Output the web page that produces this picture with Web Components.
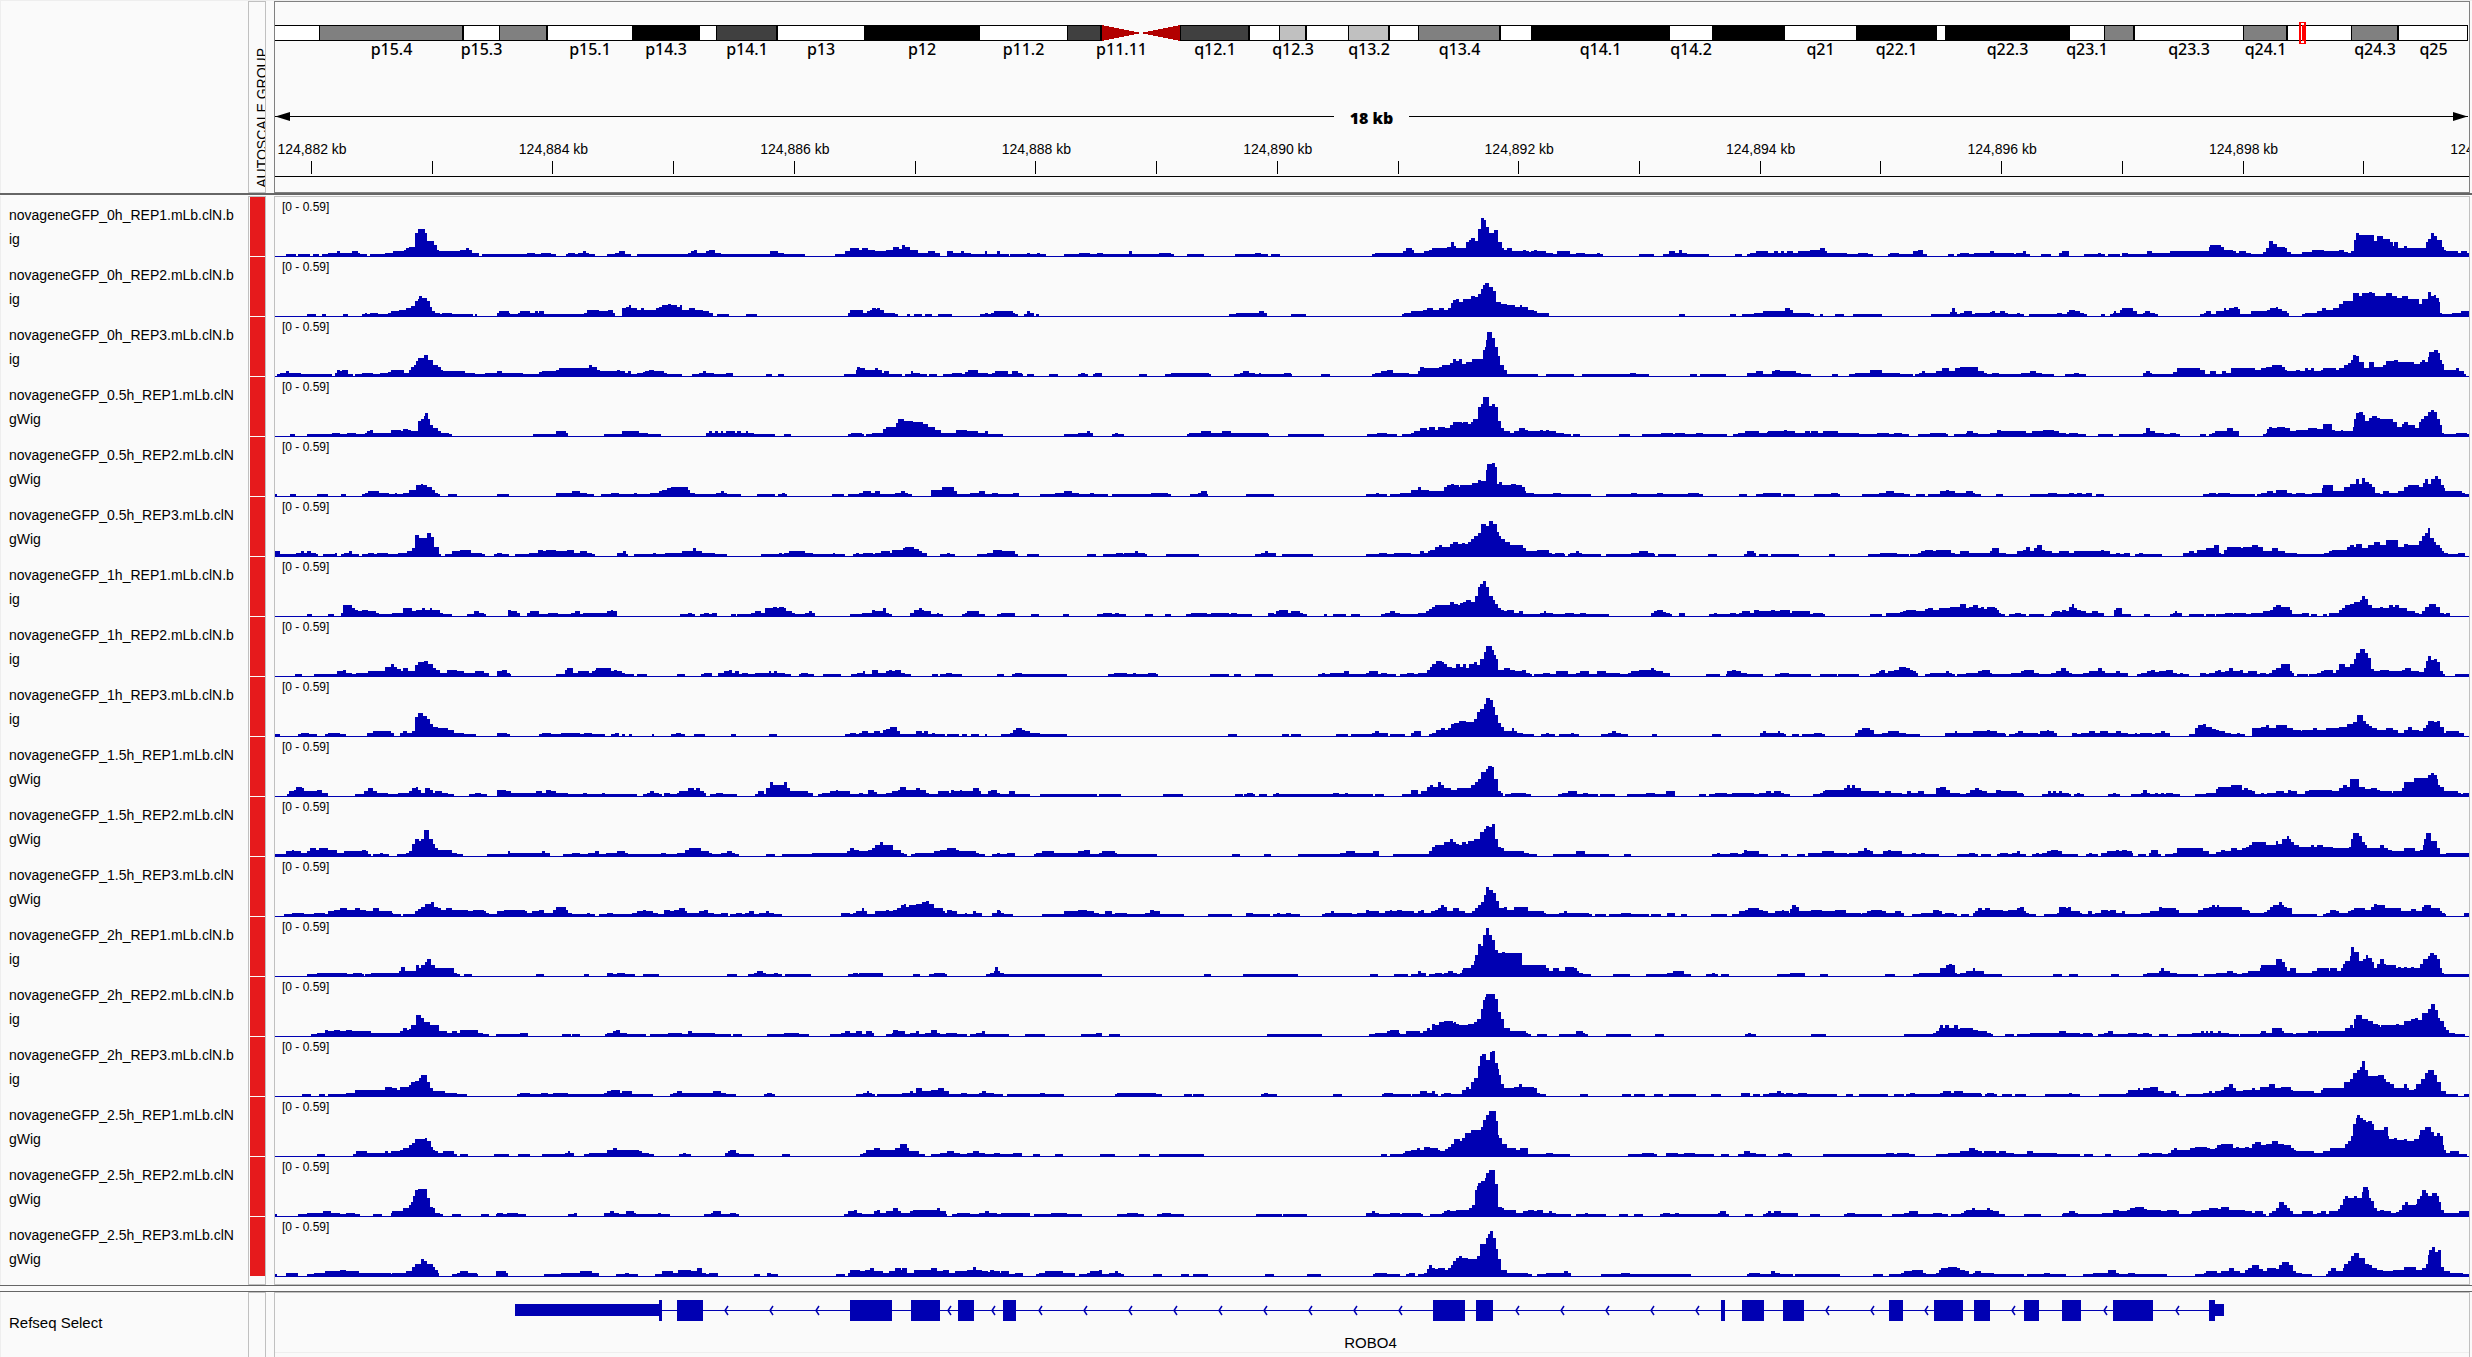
<!DOCTYPE html>
<html lang="en">
<head>
<meta charset="utf-8">
<title>Genome Viewer</title>
<style>
  html, body { margin: 0; }
  body { background: #fafafa; color: #000; font-family: "Liberation Sans", Arial, sans-serif; }
</style>
</head>
<body>
<genome-browser></genome-browser>

<template id="browser-template">
  <style>
    :host {
      display: flex; flex-direction: column; box-sizing: border-box; min-height: 100vh;
      border-top: 1px solid #eee; overflow: hidden;
    }
    panel-row { flex: none; }
    panel-row.last { flex: 1; }
    .split { flex: none; height: 2px; background: #666; margin-bottom: 1px; }
    .gap { flex: none; height: 5px; border: solid #666; border-width: 1px 0; }
    .names { padding-bottom: 7px; font-size: 14px; }
    panel-row.last track-name { font-size: 15px; }
    attribute-column { padding-bottom: 7px; }
  </style>
  <panel-row strong>
    <attribute-heading slot="attributes">AUTOSCALE GROUP</attribute-heading>
    <chromosome-ideogram slot="data"></chromosome-ideogram>
    <span-bar slot="data">18 kb</span-bar>
    <genome-ruler slot="data"></genome-ruler>
  </panel-row>
  <div class="split"></div>
  <panel-row>
    <div slot="names" class="names"></div>
    <attribute-column slot="attributes"></attribute-column>
    <div slot="data" class="plots"></div>
  </panel-row>
  <div class="gap"></div>
  <panel-row class="last">
    <track-name slot="names">Refseq Select</track-name>
    <gene-track slot="data">ROBO4</gene-track>
  </panel-row>
</template>

<template id="panel-template">
  <style>
    :host { display: grid; grid-template-columns: 248px 18px minmax(0, 1fr); padding-right: 2px; }
    .names { border-left: 1px solid #eee; min-width: 0; }
    .attributes { border: 1px solid #c0c0c0; overflow: hidden; }
    .data { margin-left: 8px; border: 1px solid #c0c0c0; min-width: 0; overflow: hidden; }
    .names { padding-top: 1px; }
    :host([strong]) .data { border-color: #808080; }
    :host(.last) .attributes, :host(.last) .data { border-bottom: 0; }
  </style>
  <div class="names"><slot name="names"></slot></div>
  <div class="attributes"><slot name="attributes"></slot></div>
  <div class="data"><slot name="data"></slot></div>
</template>

<script>
const INK = '#0000b2';

/* ---------- cytobands: end position, stain, label ---------- */
const BAND_START = 275;
const BANDS = [
  [319, 'white', ''], [464, 'gray', 'p15.4'], [499, 'white', 'p15.3'], [548, 'gray', ''],
  [632, 'white', 'p15.1'], [700, 'black', 'p14.3'], [716, 'white', ''], [778, 'dark', 'p14.1'],
  [864, 'white', 'p13'], [980, 'black', 'p12'], [1067, 'white', 'p11.2'], [1102, 'dark', ''],
  [1141, 'cen-left', 'p11.11'], [1180, 'cen-right', ''], [1250, 'dark', 'q12.1'], [1279, 'white', ''],
  [1307, 'light', 'q12.3'], [1348, 'white', ''], [1390, 'light', 'q13.2'], [1418, 'white', ''],
  [1501, 'gray', 'q13.4'], [1531, 'white', ''], [1670, 'black', 'q14.1'], [1712, 'white', 'q14.2'],
  [1785, 'black', ''], [1856, 'white', 'q21'], [1937, 'black', 'q22.1'], [1945, 'white', ''],
  [2070, 'black', 'q22.3'], [2104, 'white', 'q23.1'], [2135, 'gray', ''], [2243, 'white', 'q23.3'],
  [2288, 'gray', 'q24.1'], [2351, 'white', ''], [2399, 'gray', 'q24.3'], [2468, 'white', 'q25']
];

/* ---------- coverage: three tiles per track, each a list of "start height" steps ---------- */
const TILE_OFFSETS = [-11, 1536, 3087];
const TILE_ENDS = [1547, 1551, 1562];
const PLOT_UNITS = 4649;
const TRACKS = [
 { name: ['novageneGFP_0h_REP1.mLb.clN.b', 'ig'], tiles: [
 "11 1,34 3,55 1,59 3,85 1,91 3,105 1,110 3,124 4,142 6,148 4,174 6,186 4,192 3,206 1,212 3,244 4,260 6,284 7,289 9,296 10,308 24,314 28,328 24,334 16,347 12,354 7,359 6,402 7,415 9,422 7,428 4,443 1,449 3,545 4,561 3,575 4,595 3,606 1,627 3,632 4,646 3,652 4,664 6,670 4,676 3,689 1,714 3,732 4,740 6,752 3,765 1,778 3,887 4,893 6,898 7,905 4,925 6,931 7,944 4,957 3,1059 6,1076 4,1090 3,1134 1,1197 3,1218 6,1229 9,1249 7,1254 9,1268 7,1283 6,1306 7,1320 10,1333 8,1339 12,1346 10,1357 7,1373 4,1395 6,1409 4,1421 1,1436 6,1447 4,1464 6,1470 4,1486 3,1515 6,1520 3,1540 6",
 "0 3,19 1,21 3,57 4,64 3,78 4,85 3,97 1,136 3,167 4,191 3,206 4,218 3,273 6,280 3,337 4,363 3,369 1,396 3,432 1,498 3,540 4,553 3,568 1,574 3,593 1,788 3,795 4,855 6,860 9,873 7,878 4,898 6,909 7,915 9,947 10,956 15,962 11,967 9,987 15,994 17,999 19,1006 16,1013 28,1019 39,1026 37,1030 30,1037 24,1048 27,1055 15,1063 9,1069 7,1074 9,1086 6,1108 7,1114 6,1121 5,1126 6,1132 7,1139 6,1157 4,1171 3,1181 6,1208 3,1220 4,1240 3,1265 4,1272 3,1278 1,1354 3,1386 1,1405 3,1418 6,1431 4,1438 7,1446 4,1456 3,1502 1",
 "0 1,6 3,21 1,33 3,38 4,52 6,76 4,89 6,97 4,104 6,110 4,117 6,129 4,140 6,165 7,186 9,197 6,202 4,243 3,267 4,288 3,299 1,331 3,336 4,355 3,383 6,395 7,406 3,414 1,458 3,470 1,477 3,484 4,502 3,514 4,547 6,555 4,598 3,603 4,617 6,624 3,631 1,655 3,676 1,693 4,699 6,714 1,746 3,776 4,783 3,790 1,797 3,822 1,826 4,839 3,879 6,890 4,928 6,1011 10,1013 12,1036 10,1043 7,1062 6,1069 4,1074 6,1089 4,1100 3,1125 5,1131 9,1139 16,1147 13,1156 10,1172 9,1177 5,1184 3,1208 5,1229 7,1254 6,1286 7,1297 5,1305 4,1312 6,1318 17,1322 24,1329 22,1360 16,1367 21,1380 18,1394 15,1401 11,1404 15,1411 9,1424 11,1430 9,1470 15,1475 18,1481 24,1487 21,1494 17,1504 10,1508 7,1514 6,1538 4,1545 6,1558 4"]},
 { name: ['novageneGFP_0h_REP2.mLb.clN.b', 'ig'], tiles: [
 "11 1,78 3,97 1,110 3,119 1,155 3,166 1,196 3,201 4,207 3,212 4,229 3,251 4,256 6,273 7,289 9,300 11,308 16,314 18,317 21,322 19,333 16,339 10,344 6,350 4,360 3,365 4,385 3,430 1,434 3,440 1,482 4,485 6,506 4,510 3,525 4,530 6,551 4,562 6,568 4,571 6,581 3,630 3,665 4,672 7,698 6,717 7,728 4,732 1,746 9,754 10,761 12,765 9,778 7,786 9,792 7,818 9,825 10,832 12,844 13,850 12,862 10,869 12,874 7,888 9,901 7,918 6,931 4,939 1,948 3,974 1,1010 3,1032 1,1226 4,1229 7,1243 7,1256 4,1265 6,1271 7,1276 9,1284 8,1287 9,1294 7,1301 4,1324 3,1331 1,1350 3,1356 1,1366 3,1383 1,1388 3,1403 1,1415 3,1445 1,1505 3,1516 4,1521 3,1528 4,1534 6",
 "0 6,27 4,32 3,38 1,51 3,57 6,64 4,72 1,76 3,83 1,486 3,501 4,550 6,559 4,567 1,617 3,648 1,852 3,857 4,872 6,896 7,904 9,917 7,930 9,941 7,949 9,955 14,961 17,966 18,972 15,981 18,998 21,1006 20,1013 23,1019 28,1023 32,1027 34,1036 30,1044 26,1051 15,1062 13,1075 12,1092 10,1103 12,1107 10,1118 7,1131 6,1138 4,1163 1,1438 3,1451 1,1547 3",
 "0 3,8 1,21 3,46 4,66 6,113 9,124 7,129 4,165 3,174 1,186 3,193 1,218 3,237 1,256 3,318 1,422 3,463 5,466 9,473 5,478 3,484 4,492 6,509 3,515 4,547 5,552 6,558 4,568 6,578 4,585 3,605 4,611 3,619 1,629 3,689 4,700 3,710 5,714 7,728 6,738 4,746 3,752 1,782 3,790 1,801 3,807 4,809 6,815 4,822 7,826 9,851 6,858 3,872 4,875 6,886 4,897 3,903 1,992 3,1000 4,1005 6,1016 3,1026 6,1043 9,1048 7,1054 9,1065 10,1073 8,1077 3,1086 3,1101 6,1134 7,1140 9,1152 10,1158 8,1165 6,1176 4,1181 1,1208 3,1215 4,1240 6,1251 9,1260 7,1273 9,1287 13,1294 16,1316 24,1329 21,1335 24,1350 25,1356 24,1362 21,1386 24,1398 21,1409 19,1420 21,1432 18,1456 13,1462 18,1475 25,1481 21,1487 22,1493 19,1498 15,1501 4,1505 3,1527 4,1545 6,1560 6"]},
 { name: ['novageneGFP_0h_REP3.mLb.clN.b', 'ig'], tiles: [
 "11 1,15 3,22 4,34 6,40 4,67 3,131 1,138 4,142 7,148 6,153 7,165 3,176 1,181 3,196 4,219 3,233 4,251 5,256 7,284 4,296 7,300 10,306 12,309 16,315 19,326 22,335 17,346 12,357 10,362 7,367 6,414 4,434 3,456 4,481 6,492 4,536 3,570 5,576 6,606 7,612 9,636 9,676 12,683 10,694 7,700 6,735 7,742 6,752 4,760 6,766 3,778 4,790 5,795 6,803 7,815 6,836 4,842 3,873 1,894 3,909 4,918 6,925 4,941 3,966 4,982 1,1051 3,1065 1,1076 3,1090 1,1217 3,1242 7,1245 10,1250 9,1261 7,1279 7,1283 9,1288 7,1298 4,1302 6,1311 3,1339 1,1345 3,1358 6,1363 4,1377 3,1393 1,1397 3,1414 1,1426 3,1446 4,1466 3,1473 5,1479 7,1501 4,1522 3,1530 4,1537 6",
 "0 6,18 3,25 6,38 4,46 3,50 1,57 3,72 1,104 3,123 1,165 3,172 4,180 3,186 1,197 3,201 4,216 1,295 3,311 1,350 3,363 4,444 3,447 1,496 3,508 4,515 6,528 4,541 3,548 4,554 3,601 4,617 3,619 1,680 3,699 1,788 3,795 4,807 6,821 7,834 4,867 3,886 6,890 10,898 9,930 10,937 12,949 12,954 14,961 18,967 16,973 18,979 13,987 15,1000 18,1023 27,1027 30,1031 37,1032 45,1043 39,1049 30,1056 21,1060 12,1068 7,1074 3,1140 1,1157 3,1216 1,1233 3,1335 4,1348 3,1375 1,1462 3,1477 1,1483 3,1538 1",
 "0 1,32 4,52 6,66 3,85 6,91 7,102 6,136 4,147 3,167 1,213 3,225 1,249 3,262 4,292 7,318 4,356 3,384 1,388 3,397 4,403 6,409 4,432 6,445 9,460 6,473 9,484 10,522 6,535 4,541 3,552 4,566 3,612 4,631 6,644 4,657 3,682 1,706 3,725 4,736 3,750 1,871 4,877 6,886 4,890 3,934 5,943 9,993 7,1003 3,1013 6,1026 3,1038 6,1048 4,1057 9,1108 7,1121 9,1131 10,1144 12,1165 10,1172 7,1176 6,1196 7,1204 6,1214 9,1220 7,1227 9,1233 6,1248 7,1253 9,1280 7,1286 9,1297 12,1305 14,1312 17,1316 22,1323 21,1329 15,1340 9,1350 15,1360 10,1380 12,1387 16,1404 17,1411 15,1445 13,1458 15,1462 17,1468 15,1475 20,1477 25,1487 27,1497 24,1501 17,1505 13,1508 7,1534 9,1540 6,1551 3,1556 1"]},
 { name: ['novageneGFP_0.5h_REP1.mLb.clN', 'gWig'], tiles: [
 "11 1,43 3,54 1,78 3,131 4,148 3,164 4,182 3,202 4,206 6,213 7,219 4,256 7,279 6,282 8,293 7,300 6,313 16,320 18,326 21,329 24,335 18,340 12,345 9,357 6,363 4,379 3,386 1,557 3,606 6,627 4,632 1,708 3,746 6,783 4,802 3,828 1,925 4,931 6,938 4,943 6,950 4,956 6,961 4,967 6,986 4,991 6,999 4,1009 6,1014 4,1025 3,1070 1,1089 3,1104 1,1225 3,1232 4,1254 3,1260 1,1263 3,1276 4,1300 8,1306 10,1326 14,1331 18,1343 16,1362 15,1385 13,1395 10,1410 7,1423 4,1454 7,1478 6,1500 4,1515 6,1521 3,1537 3",
 "0 3,6 1,136 3,165 4,184 6,191 4,198 1,237 3,244 4,250 3,263 1,396 3,401 4,427 6,447 4,470 6,489 4,568 3,571 1,610 3,687 1,778 3,799 4,821 3,841 1,852 3,871 4,877 6,890 9,904 7,909 10,922 7,928 10,943 9,954 12,960 15,979 14,981 15,992 13,998 15,1003 18,1013 30,1019 33,1023 40,1036 31,1043 33,1049 30,1056 16,1062 9,1069 6,1081 4,1089 6,1101 9,1112 7,1118 6,1144 7,1150 6,1158 7,1163 6,1178 4,1196 3,1210 1,1214 3,1229 1,1312 3,1335 1,1360 3,1401 4,1426 3,1430 4,1451 3,1475 4,1490 3,1540 1",
 "0 1,2 3,13 4,28 6,57 4,74 5,76 6,110 7,117 6,134 4,155 6,165 4,168 6,183 4,193 6,225 4,269 3,307 4,333 3,344 4,361 3,375 1,394 3,420 4,453 3,458 1,470 3,496 4,499 6,510 4,522 3,548 4,562 7,571 6,624 4,636 6,660 7,682 6,694 4,707 3,714 4,734 3,750 1,776 3,807 1,820 3,871 4,877 9,886 6,896 4,915 3,928 4,941 3,949 1,992 3,1005 1,1012 3,1017 4,1023 6,1050 9,1062 6,1074 1,1125 3,1131 4,1134 8,1138 10,1144 9,1156 10,1172 9,1182 6,1196 7,1220 9,1240 8,1253 13,1271 7,1277 6,1291 7,1294 6,1316 10,1318 18,1322 24,1329 25,1337 22,1341 16,1350 19,1356 21,1366 19,1374 18,1400 15,1409 10,1420 13,1425 15,1432 12,1447 9,1456 15,1461 18,1467 21,1475 25,1481 27,1487 25,1495 18,1500 12,1505 4,1508 3,1534 4,1558 3"]},
 { name: ['novageneGFP_0.5h_REP2.mLb.clN', 'gWig'], tiles: [
 "11 3,16 1,43 3,55 1,101 3,123 1,150 3,162 1,196 3,202 4,208 6,231 4,252 3,265 4,270 3,282 4,295 7,309 12,320 13,325 12,333 10,344 7,350 4,357 3,360 1,377 3,396 1,481 3,506 1,606 4,641 6,658 4,672 3,686 1,702 3,723 4,740 3,771 4,778 3,806 4,824 6,832 7,842 9,851 10,886 7,891 4,902 3,945 4,956 6,962 4,968 3,999 1,1033 3,1071 1,1076 3,1086 4,1091 3,1095 1,1191 3,1217 1,1225 3,1249 4,1257 6,1273 4,1282 6,1293 3,1324 4,1337 6,1346 4,1352 3,1361 1,1402 7,1425 10,1450 6,1456 3,1483 4,1503 6,1515 3,1530 4,1543 3",
 "0 3,28 4,40 1,85 3,117 4,136 6,153 4,167 3,191 4,199 3,229 1,237 3,320 4,356 3,362 1,403 3,420 4,426 6,439 3,441 1,521 3,581 1,776 3,797 4,803 3,820 1,826 3,848 4,871 7,886 10,892 7,909 6,941 10,947 12,955 13,962 12,973 10,976 12,1001 14,1013 17,1019 16,1030 27,1032 33,1043 34,1049 30,1054 13,1058 15,1064 12,1081 12,1084 13,1094 12,1107 10,1112 6,1114 4,1132 3,1171 4,1189 3,1252 1,1284 3,1337 4,1350 3,1392 4,1405 3,1458 4,1482 3,1490 1",
 "0 1,15 3,32 1,51 3,66 4,104 1,108 3,133 1,174 3,210 4,225 3,229 1,275 3,311 4,326 6,343 4,364 3,377 1,390 3,409 1,415 3,441 6,453 7,460 6,473 4,496 6,511 4,516 3,528 1,559 3,574 1,631 3,669 4,689 3,714 4,726 3,731 4,743 3,750 4,763 1,771 3,788 1,998 3,1012 4,1026 3,1030 4,1055 3,1108 1,1112 3,1121 4,1133 6,1146 4,1152 7,1177 4,1186 3,1195 4,1214 3,1229 4,1248 4,1251 9,1253 12,1273 6,1297 10,1309 13,1322 18,1329 13,1335 19,1342 15,1350 13,1356 10,1362 4,1374 3,1379 6,1393 4,1411 6,1424 10,1432 12,1456 10,1464 14,1468 18,1475 13,1481 18,1490 21,1496 18,1502 12,1508 9,1512 6,1521 6,1547 4,1553 3"]},
 { name: ['novageneGFP_0.5h_REP3.mLb.clN', 'gWig'], tiles: [
 "11 6,22 3,55 4,67 6,72 4,79 6,88 4,97 3,102 1,112 3,138 4,143 1,150 3,157 4,167 6,174 3,188 1,195 3,208 4,220 3,227 4,251 3,272 4,290 6,302 9,308 22,316 19,334 24,342 20,347 10,359 3,362 1,372 3,385 6,403 7,427 4,449 3,456 1,475 3,482 4,492 3,506 1,519 3,550 4,568 7,578 6,586 7,606 6,630 7,645 4,657 6,672 4,682 3,689 1,735 4,748 6,754 3,760 1,771 3,812 4,818 3,838 4,874 6,897 9,904 6,916 4,943 3,968 1,1040 3,1079 4,1086 3,1090 4,1101 6,1134 4,1152 3,1193 4,1198 3,1218 1,1236 3,1243 4,1248 3,1257 4,1279 3,1283 4,1295 6,1314 4,1318 7,1342 9,1346 10,1365 8,1376 6,1383 4,1393 1,1420 3,1435 4,1441 3,1451 1,1499 3,1520 4,1532 7",
 "0 7,5 6,32 3,38 1,57 3,83 1,184 3,203 1,218 3,245 4,260 3,264 4,286 6,293 4,307 3,311 1,352 3,422 1,541 3,553 4,562 6,568 4,586 1,598 3,663 1,776 3,803 4,821 3,835 4,871 3,890 6,898 4,908 6,911 7,922 10,930 12,937 10,949 10,954 13,960 15,970 13,979 14,985 13,992 15,998 18,1004 21,1013 24,1019 33,1030 31,1037 36,1045 33,1054 25,1058 21,1062 18,1071 15,1081 12,1108 9,1114 6,1138 7,1163 4,1170 3,1177 4,1195 3,1197 1,1204 3,1208 4,1220 6,1227 4,1233 3,1273 1,1284 3,1337 4,1354 6,1373 4,1386 3,1388 1,1394 3,1432 1,1500 3,1519 1",
 "0 1,25 3,33 6,46 4,52 1,57 3,76 1,83 3,142 1,206 3,218 1,288 3,314 4,350 3,375 1,377 3,394 4,400 6,409 7,427 6,432 7,465 4,473 3,484 6,502 4,530 4,547 6,552 9,566 4,580 3,605 6,617 7,624 10,631 6,641 9,647 12,657 7,663 6,679 4,694 6,714 4,726 6,746 6,782 7,788 6,801 3,814 4,822 3,832 4,843 1,855 3,862 4,871 3,911 1,956 4,968 6,979 4,985 7,1004 9,1021 12,1032 4,1037 3,1043 7,1050 10,1078 9,1084 10,1102 12,1115 10,1126 6,1144 9,1158 6,1172 4,1197 3,1254 4,1265 6,1272 7,1303 10,1310 12,1318 10,1322 13,1335 9,1347 12,1360 15,1374 12,1386 17,1411 10,1425 13,1432 12,1456 16,1462 21,1468 24,1475 29,1480 19,1487 15,1493 12,1500 9,1504 6,1508 4,1517 3,1538 4,1553 1"]},
 { name: ['novageneGFP_1h_REP1.mLb.clN.b', 'ig'], tiles: [
 "11 1,78 3,90 1,123 3,137 1,150 4,155 12,174 9,180 7,187 6,195 7,208 6,225 4,232 3,258 4,273 4,282 9,302 6,310 7,322 9,328 7,340 9,344 7,360 4,368 3,386 1,417 3,433 6,443 4,453 3,459 1,505 7,511 6,523 4,531 1,545 4,552 6,570 3,590 4,611 3,639 4,646 6,658 3,664 4,714 6,722 7,728 6,735 1,870 3,886 4,894 3,900 1,912 3,919 4,930 3,938 4,948 1,977 3,987 1,991 3,1019 4,1028 6,1040 4,1050 9,1066 10,1075 9,1079 10,1089 9,1093 6,1107 4,1113 3,1134 4,1142 6,1149 4,1155 1,1229 3,1254 4,1268 4,1276 7,1282 6,1299 9,1305 4,1313 3,1318 1,1356 4,1366 7,1375 9,1382 7,1387 6,1401 3,1413 4,1419 3,1427 1,1466 3,1473 4,1478 6,1502 3,1515 1,1540 3",
 "0 3,3 4,33 1,66 3,83 1,133 3,146 1,206 3,218 4,237 3,244 4,252 3,267 1,307 3,324 1,350 3,363 1,394 3,406 4,438 3,447 4,486 3,489 4,502 3,534 1,568 4,580 3,586 6,592 7,610 4,617 6,636 4,643 3,650 1,687 3,693 1,706 3,733 1,744 3,763 1,807 3,815 4,826 6,838 4,848 3,886 4,902 6,909 8,915 10,922 12,954 15,962 13,970 12,975 14,981 15,988 17,999 15,1006 21,1013 30,1018 33,1023 36,1030 30,1036 21,1045 17,1049 13,1055 9,1062 7,1069 6,1075 7,1089 4,1101 6,1108 3,1145 4,1153 6,1158 4,1172 3,1197 4,1216 3,1229 4,1242 3,1290 1,1380 4,1386 6,1392 7,1405 5,1411 4,1419 3,1424 1,1438 4,1451 1,1502 3,1513 4,1519 3,1547 4",
 "0 4,8 3,15 4,21 6,38 4,47 7,57 6,83 7,91 6,103 7,123 4,127 6,165 3,172 4,193 3,197 1,292 3,318 1,326 4,356 5,362 6,368 7,390 6,409 8,415 9,426 7,438 9,463 10,484 13,496 9,502 10,510 12,522 9,528 10,535 8,540 10,558 9,561 7,566 4,571 3,578 1,587 3,601 4,612 3,624 1,629 3,661 1,676 3,679 5,682 6,696 5,700 7,708 6,714 10,720 13,726 9,732 7,740 6,750 4,763 6,776 4,788 1,809 7,815 9,827 3,845 1,873 3,886 1,928 3,934 4,938 6,944 4,953 1,968 3,1000 1,1004 3,1023 1,1026 3,1045 4,1062 3,1065 4,1089 3,1100 4,1115 4,1125 6,1141 7,1147 10,1153 12,1163 10,1182 7,1188 3,1208 4,1222 1,1227 3,1240 1,1252 3,1261 1,1265 4,1286 7,1292 9,1299 12,1310 13,1318 15,1331 17,1335 21,1341 18,1348 12,1356 9,1373 10,1380 9,1393 12,1400 10,1406 12,1413 9,1430 6,1448 4,1456 3,1462 6,1468 10,1477 13,1493 10,1501 4,1509 3,1513 4,1521 1"]},
 { name: ['novageneGFP_1h_REP2.mLb.clN.b', 'ig'], tiles: [
 "11 1,53 3,68 1,93 3,142 6,155 7,161 4,175 3,182 4,208 6,245 10,256 13,264 10,269 8,277 6,283 9,293 6,308 12,315 15,326 16,335 13,346 9,352 7,360 4,376 7,396 6,411 4,434 6,453 4,465 1,481 6,492 7,503 4,510 3,512 1,606 3,625 7,630 9,643 4,652 6,676 4,682 6,689 7,692 9,722 6,730 7,735 6,746 4,753 3,771 1,778 3,799 1,862 3,879 1,913 3,919 4,938 1,950 4,962 6,974 7,980 4,986 6,994 3,1001 4,1014 3,1028 4,1057 6,1063 4,1069 6,1075 4,1091 3,1104 1,1121 3,1126 4,1140 3,1154 1,1172 3,1210 1,1232 3,1244 4,1257 6,1262 3,1275 7,1288 4,1305 6,1312 7,1318 6,1324 7,1337 4,1345 3,1358 1,1403 3,1415 1,1420 3,1432 4,1445 3,1466 1,1540 3",
 "0 3,8 1,25 3,32 4,47 3,142 1,229 3,241 4,269 3,282 4,288 3,314 4,331 3,336 1,445 3,485 1,496 3,511 1,540 3,578 1,674 3,682 4,689 3,700 4,730 6,740 3,776 4,782 6,801 3,807 4,820 3,839 1,848 3,863 4,877 3,886 4,905 7,911 10,915 13,924 16,937 15,941 13,947 10,957 9,966 13,974 10,981 13,987 9,994 13,1004 15,1011 12,1018 18,1026 25,1030 31,1042 27,1048 22,1052 18,1056 7,1069 9,1080 7,1092 6,1107 7,1114 4,1124 3,1127 1,1132 3,1151 4,1165 3,1178 6,1204 3,1221 4,1229 6,1248 3,1266 6,1284 4,1315 3,1331 4,1337 6,1354 7,1380 9,1386 7,1391 6,1405 4,1419 3,1420 1,1496 3,1526 1,1538 3,1541 6",
 "0 7,8 6,19 4,32 3,66 1,91 3,102 4,121 3,167 1,186 3,222 1,225 3,269 1,292 3,305 4,311 6,316 7,324 4,331 6,343 7,355 10,368 9,377 7,383 6,390 4,395 1,409 3,419 4,453 6,460 4,466 3,473 1,478 3,496 4,522 6,530 7,547 4,552 3,591 4,612 6,619 7,641 4,650 3,676 4,687 6,697 9,708 6,714 4,720 3,744 4,757 6,776 9,784 6,790 4,814 6,822 4,840 1,858 3,867 4,879 6,888 7,897 5,905 6,920 7,934 4,944 3,950 4,956 3,968 1,992 4,1005 3,1012 4,1023 6,1031 7,1037 5,1045 6,1054 9,1062 6,1077 7,1084 4,1093 6,1112 3,1119 4,1131 3,1138 4,1144 7,1153 9,1163 13,1182 6,1188 4,1191 1,1197 3,1220 1,1223 3,1240 4,1248 6,1255 7,1273 4,1280 7,1286 13,1299 10,1310 13,1318 18,1322 24,1331 28,1341 24,1348 19,1355 8,1361 6,1373 7,1393 6,1420 7,1427 9,1440 6,1456 5,1467 9,1470 16,1475 21,1482 17,1487 18,1494 15,1501 6,1506 3,1511 1,1532 3"]},
 { name: ['novageneGFP_1h_REP3.mLb.clN.b', 'ig'], tiles: [
 "11 3,22 1,59 3,67 4,83 3,99 1,118 3,124 4,149 3,161 1,206 4,218 6,256 4,264 1,275 4,283 6,290 4,302 6,308 20,314 24,325 21,334 18,340 13,345 10,357 9,377 7,391 4,411 3,436 1,482 4,503 3,510 1,570 3,577 4,596 3,617 4,657 3,665 4,682 3,710 1,723 3,732 4,740 1,746 3,752 1,761 3,767 1,809 3,815 1,850 3,860 4,872 3,880 1,898 3,923 1,977 3,987 1,1057 3,1075 1,1218 3,1229 4,1242 3,1248 4,1254 6,1268 4,1280 6,1293 4,1299 7,1305 8,1314 10,1330 6,1336 3,1348 3,1369 6,1382 4,1387 6,1395 3,1403 4,1410 3,1430 1,1436 3,1460 1,1466 3,1478 1,1486 3,1502 1,1515 3,1520 1",
 "0 1,2 3,21 4,27 7,34 9,46 7,53 6,64 4,85 3,142 1,483 3,502 1,598 3,612 1,617 3,638 1,712 3,737 1,744 3,788 4,795 6,803 4,822 1,826 3,858 1,871 4,877 6,892 1,909 3,916 4,924 7,935 9,943 7,949 9,956 13,962 14,973 16,987 15,1005 18,1011 25,1018 28,1025 33,1030 39,1038 37,1045 30,1050 22,1055 14,1062 10,1069 6,1085 9,1090 6,1096 4,1108 3,1132 1,1146 3,1157 4,1163 3,1176 1,1184 3,1210 4,1216 3,1227 1,1273 3,1289 4,1297 6,1305 4,1317 3,1331 1,1382 3,1392 1,1509 3,1528 1",
 "0 1,59 4,66 6,72 4,97 6,103 4,110 3,114 1,127 3,142 1,148 3,174 4,190 3,197 1,261 4,267 7,275 9,292 7,301 3,318 4,331 6,355 4,370 3,399 1,451 4,473 6,478 4,496 4,510 6,540 7,547 6,562 4,578 3,581 1,587 3,599 4,606 6,617 4,648 3,654 6,667 7,673 6,682 4,689 1,720 4,731 3,740 4,757 6,770 4,780 6,797 4,815 6,825 4,839 3,855 4,858 3,865 4,890 3,897 4,909 6,917 4,928 1,968 3,981 9,987 12,998 13,1005 10,1017 8,1026 7,1032 6,1045 4,1057 3,1070 4,1077 3,1087 1,1102 9,1121 10,1131 12,1139 9,1152 12,1176 9,1189 7,1205 6,1208 7,1232 9,1240 7,1259 9,1286 10,1303 13,1316 15,1325 22,1337 16,1343 13,1350 11,1356 9,1368 7,1386 9,1400 7,1411 4,1425 7,1432 10,1441 7,1456 6,1464 9,1470 12,1475 16,1487 15,1495 16,1501 10,1508 4,1513 6,1540 4,1551 1"]},
 { name: ['novageneGFP_1.5h_REP1.mLb.clN', 'gWig'], tiles: [
 "11 1,36 3,40 6,52 7,55 10,68 9,73 6,99 7,110 4,123 1,181 3,199 6,208 9,218 6,227 4,251 3,272 4,289 4,296 6,302 9,309 10,314 7,320 4,329 9,340 7,346 4,351 6,365 4,377 3,391 1,422 3,435 4,447 3,461 1,481 7,500 6,511 4,564 6,576 4,585 7,595 6,606 4,631 3,664 4,672 3,704 4,710 3,779 1,790 3,800 4,806 6,814 4,825 3,831 1,836 4,848 3,862 4,868 6,886 9,899 7,903 9,912 6,919 4,925 1,932 3,945 4,960 3,990 1,1028 3,1034 6,1047 3,1051 9,1059 15,1066 12,1089 15,1095 9,1102 6,1141 4,1152 1,1162 3,1170 4,1186 6,1200 7,1203 6,1230 3,1248 4,1256 3,1268 7,1280 5,1286 3,1305 4,1318 6,1331 7,1336 10,1348 7,1370 9,1377 7,1391 4,1396 3,1415 6,1439 4,1444 7,1450 6,1462 7,1466 6,1490 9,1502 6,1508 3,1522 6,1528 7,1541 4",
 "0 3,19 6,32 3,64 1,85 3,206 1,210 3,256 1,345 3,388 1,498 3,515 1,518 3,523 4,536 3,540 1,549 3,566 1,578 3,585 4,591 3,706 4,719 3,731 4,737 3,790 1,795 3,814 1,852 3,871 7,886 3,892 6,905 10,911 12,918 10,928 15,935 12,941 9,955 7,968 9,999 12,1006 15,1013 18,1019 25,1030 28,1034 31,1043 30,1048 18,1055 6,1061 4,1067 1,1070 3,1083 4,1115 3,1125 1,1183 3,1191 4,1204 6,1222 3,1236 4,1247 3,1267 1,1271 3,1303 1,1329 3,1369 4,1388 3,1411 6,1431 1,1481 3,1496 1,1502 3,1515 4,1540 3",
 "0 4,47 3,57 4,72 6,84 4,89 6,104 4,110 3,123 1,172 3,186 4,193 6,197 7,237 9,244 12,250 9,254 12,261 9,273 6,311 4,324 6,337 4,361 3,371 6,380 4,394 6,407 3,432 9,441 10,453 7,463 4,484 3,496 4,504 7,515 9,523 7,530 6,540 4,547 4,559 7,571 6,604 4,617 3,619 1,657 3,669 6,676 4,681 6,687 4,693 6,700 4,714 3,718 1,725 3,731 4,737 3,746 1,797 3,808 4,815 3,822 1,845 3,867 4,871 7,879 4,885 3,896 4,903 3,909 4,915 3,920 4,934 3,949 1,981 3,1004 4,1026 8,1030 10,1057 12,1082 7,1086 9,1093 7,1103 6,1108 3,1121 4,1127 3,1133 4,1152 6,1171 4,1178 7,1184 6,1197 3,1214 6,1223 7,1271 6,1286 9,1294 12,1303 10,1309 18,1328 10,1341 8,1354 9,1368 7,1373 6,1398 4,1401 6,1419 9,1424 15,1445 19,1475 22,1481 24,1487 22,1494 18,1497 12,1501 10,1508 6,1538 4,1545 3,1550 4"]},
 { name: ['novageneGFP_1.5h_REP2.mLb.clN', 'gWig'], tiles: [
 "11 3,34 6,46 7,52 6,67 4,78 6,85 9,97 7,104 9,124 7,143 4,157 6,196 7,203 6,208 3,214 1,219 3,233 4,240 3,252 1,270 3,288 4,296 6,302 13,308 18,316 16,321 18,326 27,338 18,346 13,351 9,357 7,385 4,396 3,409 1,460 3,504 6,510 4,576 6,583 4,594 1,621 3,640 4,658 3,675 4,690 6,697 3,712 4,735 6,752 4,760 3,829 4,840 3,862 4,879 7,889 9,914 6,931 4,937 3,956 4,968 6,979 4,986 3,995 1,1051 3,1071 1,1086 3,1148 4,1223 6,1229 9,1237 7,1248 6,1268 7,1275 9,1282 12,1293 15,1300 12,1320 7,1337 4,1344 3,1350 1,1358 3,1368 4,1408 6,1420 7,1434 9,1453 7,1461 6,1496 4,1502 3,1515 1,1530 3,1540 4",
 "0 3,15 4,32 1,72 3,77 4,89 6,114 4,165 6,179 7,191 3,210 4,216 6,244 4,248 3,333 1,492 3,509 1,559 3,574 1,631 3,721 4,733 6,752 4,790 6,803 1,833 3,909 6,915 10,922 12,941 15,954 18,960 15,966 13,973 12,979 15,987 13,992 16,1005 18,1018 25,1025 28,1030 31,1037 30,1043 33,1049 18,1056 10,1062 9,1069 6,1111 4,1121 3,1138 1,1172 3,1220 6,1240 3,1290 1,1322 3,1337 1,1509 3,1519 4,1526 3,1547 4",
 "0 4,13 3,21 4,25 7,33 6,57 3,76 1,104 3,120 1,137 3,155 1,161 4,191 6,216 4,244 3,249 4,267 6,280 9,286 7,292 6,299 3,320 6,331 7,337 6,361 3,381 4,390 3,400 4,409 3,439 1,478 3,502 4,516 3,522 1,528 3,549 1,562 3,568 4,585 3,593 4,605 6,611 3,624 1,637 3,644 4,650 3,657 4,667 6,676 7,692 6,700 3,733 1,750 3,757 4,763 3,776 1,782 4,795 6,815 7,820 6,826 7,838 6,848 4,851 1,860 3,877 1,884 4,888 7,903 3,909 1,917 3,934 4,943 9,998 6,1012 3,1026 5,1037 7,1045 6,1057 9,1070 7,1082 9,1089 10,1095 12,1102 15,1131 12,1153 16,1158 13,1166 18,1176 21,1181 18,1184 15,1191 12,1201 10,1227 12,1233 10,1240 12,1253 10,1273 9,1308 10,1312 18,1316 24,1328 21,1335 15,1341 12,1346 9,1373 12,1381 9,1391 7,1398 6,1411 6,1424 9,1448 6,1459 7,1464 12,1467 18,1471 24,1481 16,1494 9,1500 3,1513 4"]},
 { name: ['novageneGFP_1.5h_REP3.mLb.clN', 'gWig'], tiles: [
 "11 1,30 3,47 4,73 3,93 4,116 3,123 6,136 7,148 9,164 7,181 9,192 7,203 6,218 9,231 6,244 6,258 4,262 3,277 1,282 3,308 6,315 8,320 10,328 13,341 15,347 10,357 9,362 7,373 9,385 7,419 6,430 7,453 6,458 4,465 3,481 6,496 7,541 6,545 4,556 6,570 7,582 4,600 7,606 10,627 7,631 4,640 3,672 4,678 3,689 1,698 3,714 4,728 3,767 4,778 6,790 7,797 6,812 4,822 3,835 7,848 6,857 7,867 9,880 6,885 4,909 6,919 7,929 4,941 3,957 4,970 1,975 3,987 4,1001 3,1006 4,1016 6,1025 3,1036 4,1051 6,1058 4,1069 3,1085 1,1211 4,1229 3,1236 4,1242 6,1255 9,1260 6,1266 3,1282 6,1306 7,1313 6,1320 7,1330 9,1337 12,1343 13,1348 10,1355 12,1369 13,1383 15,1390 16,1396 13,1408 9,1427 6,1431 4,1436 7,1446 6,1457 3,1473 4,1478 3,1490 6,1496 4,1509 1,1530 4,1540 7",
 "0 6,3 4,8 3,28 1,89 3,136 6,165 7,185 6,199 4,210 3,222 6,237 3,244 4,269 3,307 4,318 7,326 6,339 3,390 1,441 3,491 1,521 4,536 3,572 1,578 3,587 4,593 3,606 4,617 3,635 1,682 3,689 4,701 6,708 4,746 3,757 4,776 7,782 6,803 4,816 6,826 7,831 6,841 7,853 6,878 4,886 6,892 7,898 4,914 6,922 7,928 9,934 12,941 10,947 6,960 9,973 6,985 4,1001 6,1006 9,1013 12,1019 15,1025 22,1030 30,1037 27,1045 24,1051 16,1057 9,1069 10,1075 7,1084 7,1089 10,1118 6,1153 4,1157 3,1184 4,1195 6,1201 4,1248 3,1254 1,1261 3,1285 1,1290 3,1316 4,1337 3,1375 1,1380 3,1401 1,1413 4,1431 1,1443 3,1456 1,1507 3,1540 1",
 "0 3,15 6,28 7,34 9,57 7,66 6,77 4,91 6,106 7,110 6,121 4,123 8,127 12,136 10,142 6,167 7,190 6,218 7,242 4,273 3,275 4,286 6,294 7,318 6,326 4,345 6,358 4,364 1,381 3,400 4,426 7,438 6,445 3,451 4,470 3,478 1,485 3,502 1,510 4,516 6,522 9,530 7,536 9,547 7,575 6,585 7,604 9,611 10,619 6,623 4,629 3,644 1,661 3,689 4,693 10,708 9,712 10,719 6,737 4,743 3,755 6,763 3,769 4,782 7,796 6,802 7,815 4,826 6,833 3,867 4,886 6,905 10,911 9,941 7,947 4,987 7,998 9,1012 10,1017 12,1023 10,1027 12,1032 10,1057 10,1082 7,1095 6,1097 4,1127 5,1134 7,1140 10,1147 12,1159 15,1165 12,1171 10,1176 9,1188 3,1240 1,1252 3,1260 4,1267 7,1280 6,1286 4,1305 6,1312 7,1318 9,1341 7,1350 7,1355 10,1361 13,1368 12,1380 12,1383 9,1417 6,1440 8,1449 6,1456 6,1462 10,1467 12,1481 9,1501 6,1505 4,1511 3,1514 1,1551 4"]},
 { name: ['novageneGFP_2h_REP1.mLb.clN.b', 'ig'], tiles: [
 "11 1,78 3,100 4,164 3,176 4,195 3,199 1,202 3,214 4,274 6,277 10,287 6,309 12,316 9,320 12,328 15,333 18,341 12,351 9,391 4,396 3,402 1,411 3,428 1,564 3,582 1,665 3,677 1,714 4,728 3,735 4,752 3,773 1,790 3,824 1,968 3,990 1,1014 3,1026 4,1032 6,1046 4,1052 3,1069 4,1076 3,1085 1,1091 3,1147 1,1225 3,1235 4,1246 3,1249 4,1300 1,1362 3,1377 1,1396 3,1408 4,1431 3,1435 1,1517 3,1527 4,1534 6,1537 10,1544 6",
 "0 4,8 3,216 1,432 3,447 1,515 3,631 1,784 3,801 1,835 3,865 1,871 3,886 6,892 4,903 1,909 3,922 4,937 3,941 4,949 6,960 4,968 3,974 4,979 7,981 9,999 12,1004 16,1006 22,1013 33,1019 31,1023 42,1030 49,1037 42,1043 37,1049 27,1055 24,1063 25,1070 24,1106 12,1157 9,1163 6,1172 9,1184 6,1197 10,1216 9,1223 6,1227 4,1235 3,1252 1,1299 3,1335 1,1369 3,1413 4,1426 6,1450 3,1464 1,1496 3,1508 4,1515 3,1521 1,1528 3,1545 1",
 "0 1,95 3,123 4,155 1,186 3,203 1,324 3,345 1,384 3,396 4,441 9,453 12,460 13,466 12,473 4,478 3,484 4,496 6,511 9,516 6,534 3,572 1,681 3,699 1,714 3,733 1,803 3,820 1,871 3,879 4,905 6,909 9,915 6,928 4,944 3,987 1,1000 3,1026 4,1050 6,1062 4,1070 3,1082 4,1093 6,1119 9,1121 12,1144 12,1153 18,1166 15,1172 10,1177 6,1182 9,1196 4,1229 6,1240 9,1265 6,1267 9,1283 6,1290 9,1294 13,1299 16,1310 21,1312 30,1318 25,1328 16,1337 18,1343 22,1349 19,1356 15,1361 9,1368 13,1374 18,1382 13,1386 12,1407 9,1411 10,1417 9,1424 10,1430 9,1440 10,1446 9,1459 13,1464 18,1475 21,1480 24,1487 22,1494 18,1500 9,1505 4,1508 3"]},
 { name: ['novageneGFP_2h_REP2.mLb.clN.b', 'ig'], tiles: [
 "11 1,88 3,100 4,116 7,123 6,136 7,148 6,162 7,174 6,214 4,275 6,283 9,290 7,296 8,300 12,309 22,320 19,327 15,339 12,359 6,376 4,385 6,397 4,403 7,441 4,452 3,465 1,480 3,530 4,548 1,619 3,638 1,641 3,657 1,710 3,715 4,727 6,733 7,741 4,757 3,797 1,806 3,843 4,873 3,887 6,894 4,944 3,977 1,981 3,1001 1,1053 3,1089 4,1121 3,1142 1,1187 3,1211 4,1218 6,1229 4,1243 6,1254 3,1264 6,1275 4,1281 1,1305 3,1318 4,1321 7,1332 6,1346 3,1357 4,1370 6,1376 3,1389 4,1402 7,1414 4,1420 3,1432 4,1457 3,1477 1,1484 3,1497 4,1510 6,1516 3",
 "0 3,19 1,53 3,95 1,172 3,203 4,216 1,231 3,254 1,566 3,682 1,782 3,795 4,820 6,826 7,845 4,848 3,860 6,890 4,897 6,904 9,911 7,915 13,922 12,930 15,941 16,960 14,962 15,967 13,973 12,992 13,1005 15,1012 18,1019 28,1023 37,1027 40,1031 43,1049 38,1055 25,1062 18,1069 9,1075 9,1081 6,1114 4,1119 3,1125 1,1138 3,1159 1,1184 3,1220 6,1235 4,1240 3,1246 1,1284 3,1337 1,1388 3,1407 1",
 "0 1,28 3,34 4,40 3,51 1,167 3,199 1,364 3,426 4,432 6,438 9,441 12,447 9,451 12,461 9,470 12,479 8,484 9,511 7,522 6,541 4,549 3,553 1,578 3,598 1,604 3,631 4,693 6,708 4,737 3,744 4,763 3,765 1,776 3,788 4,797 6,807 3,840 4,858 3,871 4,884 3,890 1,905 3,924 1,943 3,975 4,994 6,1000 4,1004 6,1010 4,1014 6,1020 4,1030 6,1036 4,1054 3,1074 1,1076 3,1119 4,1121 6,1131 4,1144 9,1165 6,1171 4,1190 3,1195 4,1220 6,1240 4,1242 6,1299 9,1310 12,1316 9,1318 18,1322 22,1335 18,1348 16,1358 13,1370 12,1374 10,1375 12,1407 13,1413 12,1425 16,1440 18,1447 19,1453 17,1462 24,1475 28,1481 33,1490 27,1496 19,1501 16,1508 10,1513 7,1519 4,1532 3,1553 1"]},
 { name: ['novageneGFP_2h_REP3.mLb.clN.b', 'ig'], tiles: [
 "11 1,68 3,87 1,105 3,117 1,123 3,162 4,180 7,244 10,259 9,269 7,275 10,296 12,300 15,308 16,316 19,320 22,334 15,340 9,346 6,371 4,396 3,417 1,524 3,530 4,551 3,575 4,590 3,600 4,631 3,708 4,714 6,722 7,741 4,747 6,767 3,812 1,848 3,855 4,862 6,873 4,940 6,957 4,966 3,987 1,1048 3,1053 4,1065 3,1070 1,1242 3,1256 4,1265 6,1269 4,1276 3,1282 1,1287 3,1339 4,1357 6,1363 4,1370 9,1382 6,1402 7,1415 9,1428 6,1440 3,1465 4,1478 3,1502 4,1510 6,1517 4,1535 3",
 "0 3,6 1,15 3,85 4,95 3,136 1,244 3,248 4,331 3,343 1,390 3,407 1,409 3,432 1,553 3,559 4,568 3,587 1,706 3,725 1,809 3,814 4,833 3,871 1,873 3,890 6,905 4,915 6,922 3,928 1,934 3,941 4,956 3,979 7,987 10,994 8,998 15,1004 19,1013 31,1018 41,1021 43,1030 37,1038 45,1043 46,1049 34,1055 28,1058 22,1062 13,1069 9,1089 10,1100 13,1107 10,1132 9,1138 4,1145 3,1157 1,1229 3,1246 1,1318 3,1337 1,1343 3,1367 1,1386 3,1405 1,1418 3,1475 1,1507 3,1528 1",
 "0 1,19 4,38 1,44 3,59 1,66 3,79 4,95 6,104 4,110 3,114 4,129 3,140 4,159 3,222 1,242 3,256 1,269 3,331 1,343 3,364 1,369 3,377 4,388 3,441 4,447 6,464 4,470 6,489 4,528 3,530 1,536 3,541 4,555 3,562 1,572 3,593 1,599 3,623 1,663 3,714 4,720 3,737 1,778 3,835 4,839 7,860 9,865 7,871 9,885 10,903 6,915 4,930 6,941 3,947 1,962 3,998 4,1011 6,1017 4,1023 6,1037 7,1043 10,1054 13,1062 9,1068 6,1084 7,1102 9,1108 7,1119 10,1138 13,1151 9,1163 10,1184 7,1190 6,1234 4,1248 7,1253 9,1297 15,1309 18,1316 24,1325 27,1331 30,1335 36,1341 27,1348 21,1370 22,1382 18,1386 15,1395 13,1404 9,1424 13,1430 9,1435 7,1445 8,1450 13,1461 18,1468 24,1475 27,1487 22,1495 15,1502 6,1513 3,1538 1,1551 3"]},
 { name: ['novageneGFP_2.5h_REP1.mLb.clN', 'gWig'], tiles: [
 "11 1,100 3,116 1,177 3,182 6,207 4,244 6,251 4,256 6,275 7,283 9,296 12,302 14,308 18,328 19,334 16,341 10,346 7,351 6,357 4,367 6,391 3,396 1,403 3,421 1,475 3,506 1,525 3,551 1,576 3,625 4,631 6,637 4,645 1,665 3,677 4,714 7,727 9,735 7,783 6,789 4,803 3,815 1,868 3,875 4,881 3,893 1,964 4,970 6,976 7,987 4,994 3,1025 1,1085 3,1102 1,1250 3,1257 4,1264 7,1281 9,1292 7,1325 9,1336 13,1350 9,1355 6,1375 3,1388 1,1402 3,1420 4,1436 6,1450 4,1463 3,1478 4,1490 6,1502 4,1516 3,1534 4",
 "0 3,28 4,46 3,47 1,70 3,85 1,117 3,133 1,212 3,244 1,295 3,318 1,337 3,432 1,807 3,820 1,826 3,854 4,858 6,872 7,884 9,890 7,898 10,911 9,928 7,932 6,944 8,949 10,955 13,962 18,975 16,980 19,985 24,998 27,1013 27,1019 30,1023 37,1031 42,1037 46,1051 36,1055 22,1058 19,1063 13,1074 9,1094 7,1102 9,1119 3,1157 4,1172 3,1208 1,1331 3,1360 4,1385 3,1392 1,1411 4,1437 3,1449 4,1472 3,1513 1,1528 3,1545 1",
 "0 1,13 3,25 6,38 4,51 3,72 1,97 3,108 4,123 3,127 1,193 3,326 4,343 3,350 4,375 3,388 1,432 3,458 4,484 6,502 9,515 7,522 6,530 4,535 6,559 4,566 6,580 4,598 3,625 6,638 4,689 3,737 1,746 3,765 1,790 3,803 1,860 3,865 4,884 3,890 4,911 3,924 4,930 7,937 9,944 7,971 9,981 10,1006 9,1014 8,1023 9,1028 12,1037 13,1062 9,1068 10,1074 9,1087 10,1095 9,1102 13,1108 15,1121 12,1131 13,1144 16,1157 13,1170 12,1184 9,1191 7,1196 6,1234 4,1252 6,1267 9,1299 13,1305 16,1312 21,1316 33,1322 39,1324 42,1331 39,1337 37,1343 35,1349 36,1356 33,1361 27,1381 30,1391 21,1393 18,1404 19,1409 17,1424 18,1430 16,1445 18,1456 22,1458 27,1468 30,1481 25,1487 21,1494 24,1500 21,1506 12,1509 7,1513 4,1521 6,1540 3,1558 1"]},
 { name: ['novageneGFP_2.5h_REP2.mLb.clN', 'gWig'], tiles: [
 "11 3,15 1,59 3,78 4,112 6,130 4,149 3,162 4,181 3,192 1,218 3,237 1,256 4,259 6,282 9,295 12,300 15,303 21,308 27,314 28,326 28,333 19,340 10,346 9,351 4,360 3,366 1,386 3,405 1,448 3,465 1,479 3,482 4,494 3,503 4,526 3,542 1,631 3,645 4,651 1,708 4,720 6,729 4,740 3,754 6,771 4,776 3,822 4,828 3,848 1,920 3,935 4,940 6,956 3,976 4,987 3,994 1,1217 3,1225 6,1237 7,1244 4,1254 3,1280 6,1286 7,1293 4,1306 6,1320 9,1332 6,1337 4,1357 6,1362 7,1413 9,1420 6,1432 3,1435 1,1445 3,1457 4,1484 3,1503 4,1516 6,1523 4,1540 3",
 "0 3,2 4,64 1,72 3,108 4,142 3,174 1,248 3,269 4,292 3,305 1,333 3,343 4,362 3,390 1,542 3,598 1,600 3,651 1,776 4,788 6,795 4,803 3,826 4,848 3,852 4,892 3,896 1,911 3,937 4,941 6,947 7,954 6,966 7,994 9,1000 12,1006 27,1011 31,1013 34,1019 36,1027 39,1030 44,1036 47,1049 33,1055 10,1063 9,1069 7,1094 4,1108 6,1119 7,1132 6,1138 7,1151 4,1163 6,1170 4,1178 3,1210 1,1220 3,1240 4,1246 3,1284 1,1312 3,1331 1,1343 3,1362 1,1398 3,1405 4,1419 3,1430 4,1438 3,1521 4,1526 6,1538 3,1545 1",
 "0 1,28 3,44 1,66 3,72 4,77 6,83 4,89 6,104 4,140 1,165 3,186 1,237 3,244 4,261 3,318 1,339 3,364 4,375 6,395 3,426 4,445 3,458 1,464 3,485 4,492 6,496 7,509 9,516 7,540 9,547 7,553 6,566 3,578 1,619 3,655 1,699 3,702 4,714 6,727 4,733 3,784 4,808 7,820 6,838 7,844 9,854 10,873 8,879 7,909 6,922 7,943 6,947 3,973 4,975 6,994 7,1012 9,1031 8,1037 10,1054 7,1087 6,1102 4,1108 6,1125 3,1131 1,1138 4,1144 6,1152 9,1159 15,1170 12,1176 9,1182 6,1190 3,1208 6,1232 3,1240 4,1248 6,1260 3,1265 6,1285 8,1288 12,1294 18,1299 21,1305 19,1318 21,1325 19,1335 25,1337 30,1348 27,1350 19,1355 16,1360 9,1368 6,1374 7,1381 6,1397 4,1407 5,1413 7,1420 12,1426 15,1432 12,1449 13,1452 18,1458 21,1462 27,1470 24,1475 21,1484 24,1494 21,1498 15,1502 7,1508 4,1540 6"]},
 { name: ['novageneGFP_2.5h_REP3.mLb.clN', 'gWig'], tiles: [
 "11 3,15 1,34 4,60 1,78 3,94 4,117 6,148 7,161 6,188 4,256 3,258 4,288 6,302 10,308 13,320 18,327 16,333 13,345 10,350 7,356 4,359 1,386 3,397 4,404 6,421 4,440 3,441 1,479 6,500 4,505 1,581 3,617 4,657 6,682 4,697 1,733 3,752 4,761 3,780 1,816 3,831 6,848 6,855 4,866 7,893 6,905 9,916 4,925 3,931 4,949 1,1026 3,1038 1,1053 4,1063 3,1076 1,1199 3,1218 1,1225 4,1229 7,1250 6,1262 7,1271 9,1281 6,1300 4,1312 6,1325 9,1337 7,1340 9,1350 4,1356 4,1366 7,1402 9,1414 6,1426 7,1440 4,1451 6,1478 7,1490 10,1497 7,1510 6,1522 5,1526 7,1534 6",
 "0 4,3 6,19 3,32 4,50 1,76 3,83 4,95 6,133 4,159 1,167 3,184 4,191 6,210 7,216 3,232 4,244 6,250 4,256 3,263 1,324 3,344 1,384 3,400 1,409 3,441 1,562 3,581 1,651 3,680 1,790 3,795 4,820 3,848 1,860 3,867 4,879 1,886 3,898 4,905 8,909 12,916 9,922 8,928 9,943 7,949 9,955 12,961 16,966 19,973 21,979 19,992 18,1005 18,1012 21,1018 33,1030 39,1034 43,1039 46,1044 39,1051 28,1055 18,1061 7,1075 4,1119 3,1127 1,1138 3,1157 4,1195 6,1204 4,1210 1,1273 3,1316 4,1335 3,1464 1",
 "0 1,32 3,36 4,59 3,83 6,91 4,103 3,129 1,133 3,229 1,299 3,320 1,333 3,358 4,364 6,381 7,406 4,411 3,432 4,438 7,444 9,458 10,478 9,484 7,494 6,502 3,510 4,515 6,528 4,555 3,619 1,625 3,661 4,675 3,708 1,744 3,766 4,790 4,796 7,815 4,820 3,839 4,855 3,922 1,981 3,1000 4,1005 6,1028 4,1037 6,1054 9,1065 6,1077 4,1087 7,1093 9,1102 12,1118 8,1125 6,1133 9,1152 8,1159 12,1165 15,1181 12,1190 6,1196 4,1209 3,1229 1,1259 3,1264 6,1270 9,1280 6,1294 9,1297 13,1305 16,1312 21,1318 24,1329 19,1341 13,1350 12,1356 9,1366 7,1380 6,1400 7,1424 10,1449 7,1462 9,1470 13,1475 22,1477 27,1483 30,1490 25,1496 27,1502 10,1508 6,1521 4,1532 4,1550 3"]}
];

/* ---------- gene model ---------- */
const GENE_WIDTH = 2194;
const EXONS = [[384,387],[402,428],[575,617],[636,665],[683,699],[728,741],[1158,1190],[1201,1218],[1446,1450],[1467,1489],[1508,1529],[1614,1628],[1659,1688],[1699,1715],[1749,1764],[1787,1806],[1838,1878],[1934,1940]];
const UTRS = [[240,384],[1940,1949]];
const ARROWS = [449,494,540,672,716,763,808,853,898,943,988,1033,1078,1123,1240,1285,1330,1375,1420,1550,1595,1649,1736,1828,1900];

class BaseElement extends HTMLElement {
  constructor() {
    super();
    this.attachShadow({ mode: 'open' });
  }
  connectedCallback() {
    if (!this.shadowRoot.childNodes.length) this.render();
  }
  html(markup) { this.shadowRoot.innerHTML = markup; }
}

class PanelRow extends BaseElement {
  render() { this.shadowRoot.append(document.getElementById('panel-template').content.cloneNode(true)); }
}

class AttributeHeading extends BaseElement {
  render() {
    this.html(`<style>
      :host { display: flex; align-items: flex-end; justify-content: flex-end; height: 100%; box-sizing: border-box; padding-bottom: 4px; overflow: hidden; }
      span { flex: none; writing-mode: vertical-rl; transform: rotate(180deg); font-size: 14px; line-height: 16px; white-space: nowrap; margin-right: -5px; }
    </style><span><slot></slot></span>`);
  }
}

class ChromosomeIdeogram extends BaseElement {
  render() {
    let from = BAND_START;
    const bands = BANDS.map(([to, stain, label]) => {
      const width = to - from;
      from = to;
      let box = `<div class="box ${stain}"></div>`;
      if (stain === 'cen-left') box = '<svg class="box cen" viewBox="0 0 40 16" preserveAspectRatio="none"><path d="M0 0L40 8L0 16Z"/></svg>';
      if (stain === 'cen-right') box = '<svg class="box cen" viewBox="0 0 40 16" preserveAspectRatio="none"><path d="M40 0L0 8L40 16Z"/></svg>';
      return `<div class="band" style="flex-grow:${width}">${box}<div class="label"><span>${label}</span></div></div>`;
    }).join('');
    this.html(`<style>
      :host { display: flex; position: relative; margin: 23px 1px 0 0; font: 500 16px/16px "Noto Sans", "Open Sans", sans-serif; }
      .band { flex: 0 0 0; min-width: 0; }
      .box { display: block; width: 100%; height: 16px; box-sizing: border-box; border: 1px solid #000; border-width: 1px 2px 1px 1px; }
      .white { background: #fff; border-width: 1px 0; }
      .band:first-child .box { border-left-width: 1px; }
      .band:last-of-type .box { border-right-width: 1px; }
      .gray { background: #808080; }
      .dark { background: #404040; }
      .light { background: #c0c0c0; }
      .black { background: #000; }
      .cen { border: 0; fill: #b20000; shape-rendering: crispEdges; }
      .label { display: flex; justify-content: center; height: 16px; }
      .label span { flex: none; white-space: nowrap; }
      .view { position: absolute; left: 92.3%; top: -3px; width: 7px; height: 22px; box-sizing: border-box; border: 2px solid #f00; border-width: 1px 2px; padding: 2px 0 2px 1px; }
      .view i { display: block; height: 100%; background: #f00; }
    </style>${bands}<span class="view"><i></i></span>`);
  }
}

class SpanBar extends BaseElement {
  render() {
    this.html(`<style>
      :host { display: flex; align-items: flex-start; margin: 53px 1px 0 0; height: 16px; font: 700 16px/16px "Noto Sans", "Open Sans", sans-serif; }
      .line { flex: 1; display: flex; align-items: center; height: 13px; }
      .line i { flex: 1; height: 1px; background: #000; }
      svg { flex: none; width: 15px; height: 9px; }
      b { flex: none; width: 75px; text-align: center; }
    </style>
    <div class="line"><svg viewBox="0 0 15 9"><path d="M0 4h2L15 0V9L2 5H0Z"/></svg><i></i></div>
    <b><slot></slot></b>
    <div class="line"><i></i><svg viewBox="0 0 15 9"><path d="M15 4h-2L0 0V9L13 5h2Z"/></svg></div>`);
  }
}

class GenomeRuler extends BaseElement {
  render() {
    const marks = Array.from({ length: 10 }, (_, i) =>
      `<div class="mark"><span>124,${882 + i * 2} kb</span><div class="ticks"><i></i></div></div>`).join('');
    this.html(`<style>
      :host { display: block; margin-top: 15px; padding-bottom: 15px; overflow: hidden; }
      .marks { display: flex; margin-left: -3.86%; border-bottom: 1px solid #000; padding-bottom: 2px; }
      .mark { flex: none; width: 10.596%; text-align: center; font-size: 14px; line-height: 16px; }
      .mark span { display: block; margin-bottom: 4px; padding-left: 2px; white-space: nowrap; }
      .ticks { display: flex; justify-content: center; height: 13px; border-left: 1px solid #000; }
      .ticks i { width: 1px; background: #000; }
    </style><div class="marks">${marks}</div>`);
  }
}

class TrackName extends BaseElement {
  render() {
    this.html(`<style>
      :host { display: flex; flex-direction: column; justify-content: center; height: 60px; margin: 0 7px 0 8px; overflow: hidden; white-space: nowrap; line-height: 24px; }
    </style><slot></slot>`);
  }
}

class AttributeColumn extends BaseElement {
  render() {
    this.html(`<style>
      :host { display: block; padding-left: 1px; }
      div { height: 59px; background: #e61a1c; margin-bottom: 1px; }
    </style>${'<div></div>'.repeat(TRACKS.length)}`);
  }
}

class SignalTrack extends BaseElement {
  set tiles(value) { this._tiles = value; }
  render() {
    let path = 'M0 60';
    this._tiles.forEach((tile, t) => {
      const steps = tile.split(',').map(step => step.split(' ').map(Number));
      steps.forEach(([x, h], i) => {
        const end = i + 1 < steps.length ? steps[i + 1][0] : TILE_ENDS[t];
        path += `L${x + TILE_OFFSETS[t]} ${60 - h}L${end + TILE_OFFSETS[t]} ${60 - h}`;
      });
    });
    path += `L${PLOT_UNITS} 60Z`;
    this.html(`<style>
      :host { display: grid; height: 60px; }
      svg, span { grid-area: 1 / 1; }
      svg { display: block; width: 100%; height: 60px; shape-rendering: crispEdges; }
      span { padding: 3px 0 0 7px; font-size: 12px; line-height: 14px; }
    </style>
    <svg viewBox="0 0 ${PLOT_UNITS} 60" preserveAspectRatio="none"><path fill="${INK}" d="${path}"/></svg>
    <span><slot></slot></span>`);
  }
}

class GeneTrack extends BaseElement {
  render() {
    const bars = (list, y, h) => list.map(([a, b]) => `<rect x="${a}" y="${y}" width="${b - a}" height="${h}"/>`).join('');
    const arrows = ARROWS.map(x => `M${x + 4} 13L${x + 1} 17.5L${x + 4} 22`).join('');
    this.html(`<style>
      :host { display: grid; height: 59px; border-bottom: 1px solid #eee; }
      svg, span { grid-area: 1 / 1; }
      svg { display: block; width: 100%; height: 59px; fill: ${INK}; }
      .bars { shape-rendering: crispEdges; }
      .arrows { fill: none; stroke: ${INK}; stroke-width: 1.5; }
      span { padding: 41px 3px 0 0; text-align: center; font-size: 15px; line-height: 18px; }
    </style>
    <svg viewBox="0 0 ${GENE_WIDTH} 59" preserveAspectRatio="none">
      <g class="bars"><rect x="384" y="17" width="1556" height="1"/>${bars(UTRS, 11, 12)}${bars(EXONS, 7, 21)}</g>
      <path class="arrows" d="${arrows}"/>
    </svg><span><slot></slot></span>`);
  }
}

class GenomeBrowser extends BaseElement {
  render() {
    this.shadowRoot.append(document.getElementById('browser-template').content.cloneNode(true));
    const names = this.shadowRoot.querySelector('.names');
    const plots = this.shadowRoot.querySelector('.plots');
    for (const track of TRACKS) {
      const name = document.createElement('track-name');
      for (const line of track.name) {
        const div = document.createElement('div');
        div.textContent = line;
        name.append(div);
      }
      names.append(name);
      const plot = document.createElement('signal-track');
      plot.tiles = track.tiles;
      plot.textContent = '[0 - 0.59]';
      plots.append(plot);
    }
  }
}

customElements.define('panel-row', PanelRow);
customElements.define('attribute-heading', AttributeHeading);
customElements.define('chromosome-ideogram', ChromosomeIdeogram);
customElements.define('span-bar', SpanBar);
customElements.define('genome-ruler', GenomeRuler);
customElements.define('track-name', TrackName);
customElements.define('attribute-column', AttributeColumn);
customElements.define('signal-track', SignalTrack);
customElements.define('gene-track', GeneTrack);
customElements.define('genome-browser', GenomeBrowser);
</script>
</body>
</html>
